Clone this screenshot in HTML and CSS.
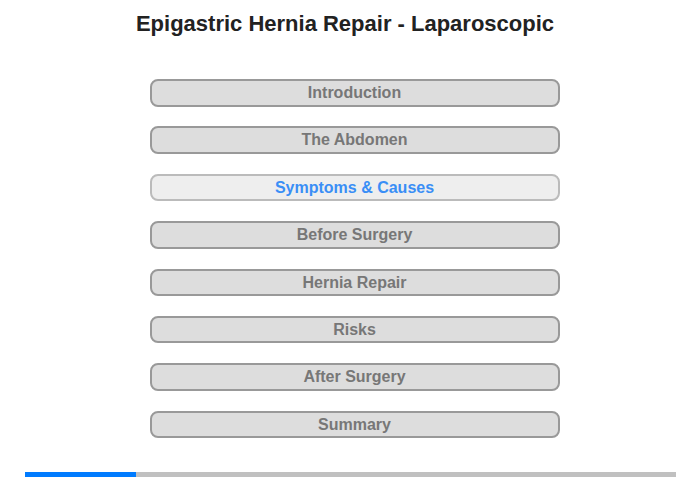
FILE: index.html
```html
<!DOCTYPE html>
<html lang="en">
<head>
  <meta charset="UTF-8"/>
  <title>Epigastric Hernia Repair - Laparoscopic</title>
  <link rel="stylesheet" href="styles.css">
</head>
<body>
  <h1>Epigastric Hernia Repair - Laparoscopic</h1>

  <div class="menu">
    <div class="item">Introduction</div>
    <div class="item">The Abdomen</div>
    <div class="item active">Symptoms &amp; Causes</div>
    <div class="item">Before Surgery</div>
    <div class="item">Hernia Repair</div>
    <div class="item">Risks</div>
    <div class="item">After Surgery</div>
    <div class="item">Summary</div>
  </div>

  <div class="progress"><div class="fill" style="width:17%"></div></div>
</body>
</html>
```

FILE: styles.css
```css
body { font-family: "Liberation Sans", Arial, sans-serif; background:#fff; margin:0; width:700px; height:480px; position:relative; }
h1 { margin:0; padding-top:12px; width:690px; text-align:center; font-size:22px; color:#222; height:34px; line-height:24px; }
.menu { display:flex; flex-direction:column; align-items:center; gap:19.9px; padding-top:33px; padding-left:9px; }
.item { box-sizing:border-box; width:410px; height:27.5px; line-height:23px; border:2px solid #999; border-radius:8px; background:#ddd; color:#777; font-weight:bold; font-size:16px; text-align:center; }
.item.active { background:#eee; border-color:#bbb; color:#3a8ef6; }
.progress { position:absolute; left:25px; top:472px; width:651px; height:5px; background:#c0c0c0; }
.fill { height:100%; background:#007bff; }
```
